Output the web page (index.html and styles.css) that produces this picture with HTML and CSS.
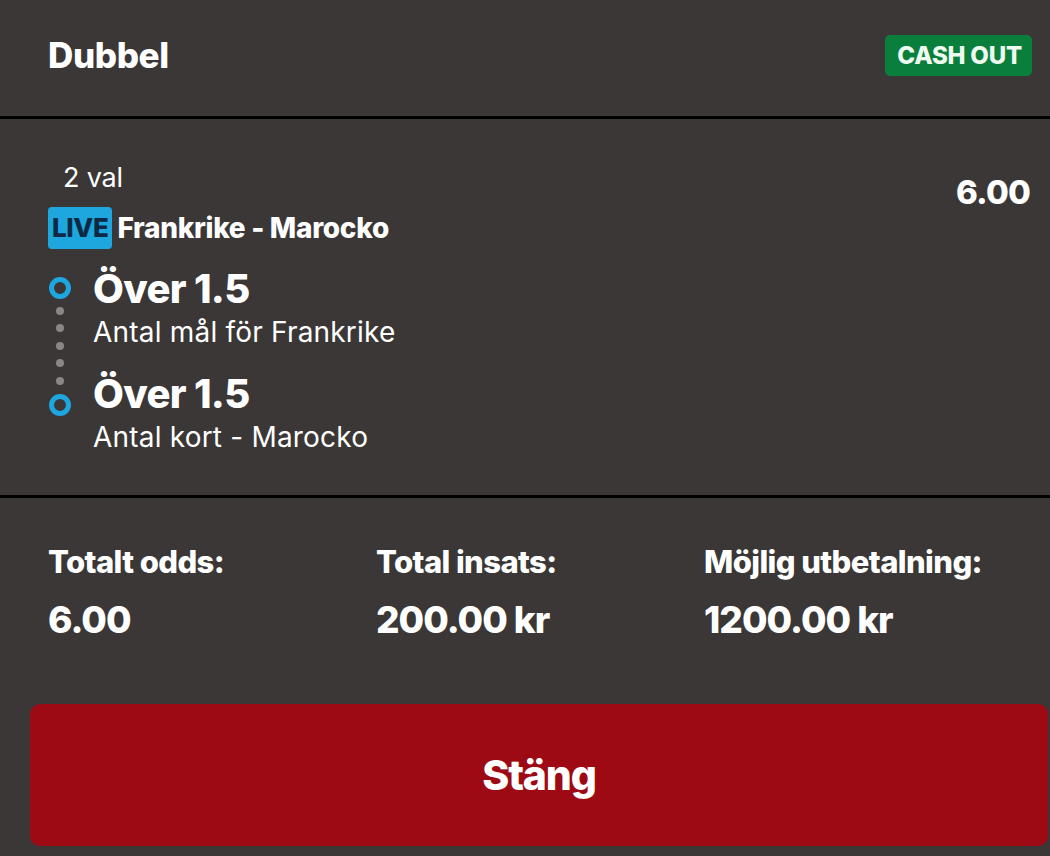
FILE: index.html
```html
<!DOCTYPE html>
<html lang="sv">
<head>
    <meta charset="UTF-8">
    <meta name="viewport" content="width=device-width, initial-scale=1.0">
    <title>Dubbel</title>
    <link rel="stylesheet" href="styles.css">
</head>
<body>
    <div class="header">
        <h1>Dubbel</h1>
        <span class="cashout">CASH OUT</span>
    </div>

    <div class="selection">
        <div class="sel-top">
            <div>
                <div class="count">2 val</div>
                <div class="event">
                    <span class="live">LIVE</span>
                    <span class="event-name">Frankrike - Marocko</span>
                </div>
            </div>
            <div class="odds">6.00</div>
        </div>

        <div class="legs">
            <svg class="timeline" width="24" height="141" viewBox="0 0 24 141">
                <circle cx="12" cy="12" r="8.5" fill="none" stroke="#1ea6df" stroke-width="5"/>
                <circle cx="12" cy="35" r="4" fill="#8a8685"/>
                <circle cx="12" cy="52" r="4" fill="#8a8685"/>
                <circle cx="12" cy="70" r="4" fill="#8a8685"/>
                <circle cx="12" cy="87" r="4" fill="#8a8685"/>
                <circle cx="12" cy="105" r="4" fill="#8a8685"/>
                <circle cx="12" cy="129" r="8.5" fill="none" stroke="#1ea6df" stroke-width="5"/>
            </svg>
            <div class="leg-list">
                <div class="leg">
                    <div class="leg-title">Över 1.5</div>
                    <div class="leg-market">Antal mål för Frankrike</div>
                </div>
                <div class="leg">
                    <div class="leg-title">Över 1.5</div>
                    <div class="leg-market">Antal kort - Marocko</div>
                </div>
            </div>
        </div>
    </div>

    <div class="totals">
        <div class="total">
            <div class="total-label">Totalt odds:</div>
            <div class="total-value">6.00</div>
        </div>
        <div class="total">
            <div class="total-label">Total insats:</div>
            <div class="total-value">200.00 kr</div>
        </div>
        <div class="total">
            <div class="total-label">Möjlig utbetalning:</div>
            <div class="total-value">1200.00 kr</div>
        </div>
    </div>

    <button class="close-btn">Stäng</button>
</body>
</html>
```

FILE: styles.css
```css
body {
    font-family: Inter, "Noto Sans", sans-serif;
    background-color: #3a3736;
    color: #fff;
    margin: 0;
    padding: 0;
    width: 1050px;
    height: 856px;
    overflow: hidden;
}
.header {
    display: flex;
    justify-content: space-between;
    align-items: center;
    height: 110px;
    padding: 0 18px 6px 48px;
    border-bottom: 3px solid #000;
}
h1 {
    margin: 0;
    font-size: 35px;
    font-weight: 800;
    letter-spacing: -0.4px;
}
.cashout {
    background-color: #0a7f3c;
    color: #eefaf0;
    font-size: 24px;
    font-weight: 800;
    line-height: 41px;
    padding: 0 10px 0 12px;
    border-radius: 5px;
    letter-spacing: -0.2px;
}
.selection {
    padding: 44px 20px 38px 48px;
    border-bottom: 3px solid #000;
}
.sel-top {
    display: flex;
    justify-content: space-between;
    align-items: flex-start;
}
.count {
    font-size: 27px;
    line-height: 30px;
    padding-left: 15px;
    letter-spacing: -0.2px;
}
.event {
    display: flex;
    align-items: center;
    margin-top: 14px;
    height: 42px;
}
.live {
    background-color: #1ea6df;
    color: #0d2a44;
    font-size: 26px;
    font-weight: 800;
    line-height: 42px;
    padding: 0 4px;
    border-radius: 4px;
    letter-spacing: -0.4px;
    margin-right: 5px;
}
.event-name {
    font-size: 28px;
    font-weight: 800;
    line-height: 42px;
    letter-spacing: -0.3px;
}
.odds {
    font-size: 33px;
    font-weight: 800;
    line-height: 40px;
    margin-top: 9px;
    letter-spacing: -0.8px;
}
.legs {
    display: grid;
    grid-template-columns: 45px 1fr;
    margin-top: 17px;
}
.timeline {
    margin-top: 10px;
}
.leg + .leg {
    margin-top: 19px;
}
.leg-title {
    font-size: 40px;
    font-weight: 800;
    line-height: 46px;
    letter-spacing: -0.7px;
}
.leg-market {
    font-size: 28px;
    line-height: 40px;
    letter-spacing: 0.2px;
}
.totals {
    display: grid;
    grid-template-columns: 328px 328px 1fr;
    padding: 45px 0 0 48px;
}
.total-label {
    font-size: 31px;
    font-weight: 800;
    line-height: 38px;
    letter-spacing: -0.6px;
}
.total-value {
    font-size: 37px;
    font-weight: 800;
    line-height: 46px;
    margin-top: 16px;
    letter-spacing: -1px;
}
.close-btn {
    display: flex;
    justify-content: center;
    align-items: center;
    width: 1018px;
    height: 142px;
    margin: 61px 0 0 30px;
    background-color: #9e0a14;
    color: #fff;
    border: none;
    border-radius: 10px;
    font-family: inherit;
    font-size: 41px;
    font-weight: 800;
    letter-spacing: -1.2px;
    cursor: pointer;
}
```
